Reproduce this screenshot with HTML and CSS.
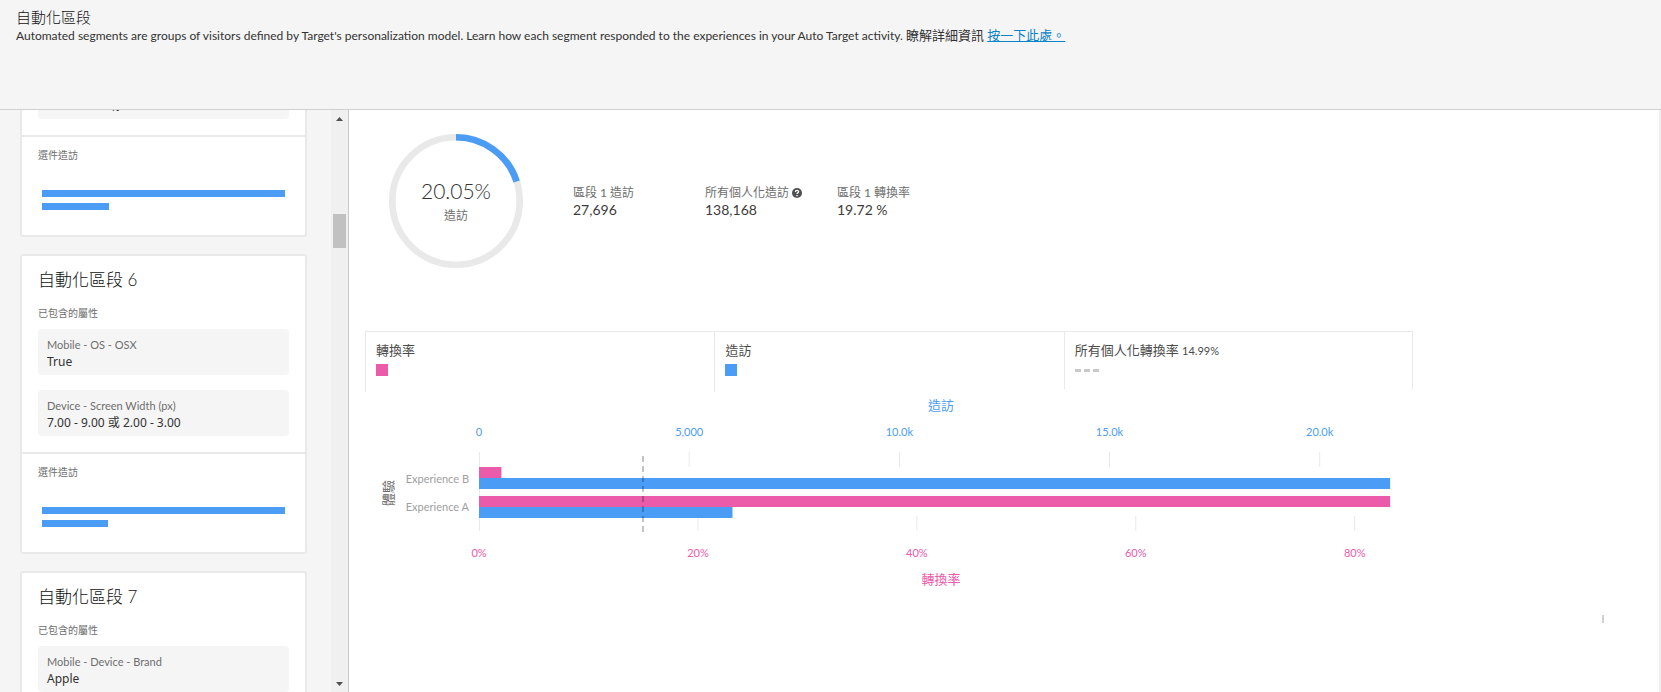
FILE: index.html
```html
<!DOCTYPE html>
<html lang="zh-Hant">
<head>
<meta charset="utf-8">
<title>自動化區段</title>
<link rel="stylesheet" href="styles.css">
</head>
<body>
<header class="page-header">
  <h1 class="page-title">自動化區段</h1>
  <p class="page-intro">Automated segments are groups of visitors defined by Target's personalization model. Learn how each segment responded to the experiences in your Auto Target activity. <span class="more">瞭解詳細資訊 <a class="link" href="#">按一下此處。</a></span></p>
</header>
<div class="body">
  <aside class="sidebar">
    <div class="segments">
      <article class="card card-clipped">
        <div class="card-attributes">
          <div class="attribute"><span class="attribute-value">7.00 - 9.00 或</span></div>
        </div>
        <div class="card-visits">
          <h3 class="card-label">選件造訪</h3>
          <div class="mini-chart"><i class="mini-bar" style="width:100%"></i><i class="mini-bar" style="width:27.7%"></i></div>
        </div>
      </article>
      <article class="card">
        <div class="card-attributes">
          <h2 class="card-title">自動化區段 6</h2>
          <h3 class="card-label">已包含的屬性</h3>
          <div class="attribute"><span class="attribute-name">Mobile - OS - OSX</span><span class="attribute-value">True</span></div>
          <div class="attribute"><span class="attribute-name">Device - Screen Width (px)</span><span class="attribute-value">7.00 - 9.00 或 2.00 - 3.00</span></div>
        </div>
        <div class="card-visits">
          <h3 class="card-label">選件造訪</h3>
          <div class="mini-chart"><i class="mini-bar" style="width:100%"></i><i class="mini-bar" style="width:27.3%"></i></div>
        </div>
      </article>
      <article class="card">
        <div class="card-attributes">
          <h2 class="card-title">自動化區段 7</h2>
          <h3 class="card-label">已包含的屬性</h3>
          <div class="attribute"><span class="attribute-name">Mobile - Device - Brand</span><span class="attribute-value">Apple</span></div>
        </div>
      </article>
    </div>
    <div class="scrollbar">
      <button class="scroll-button" type="button" aria-label="Up"><svg width="7" height="4" viewBox="0 0 7 4"><path d="M0 4L3.500 0L7 4z" fill="#505050"/></svg></button>
      <div class="scroll-track"><div class="scroll-thumb"></div></div>
      <button class="scroll-button" type="button" aria-label="Down"><svg width="7" height="4" viewBox="0 0 7 4"><path d="M0 0L3.500 4L7 0z" fill="#505050"/></svg></button>
    </div>
  </aside>
  <main class="detail">
    <section class="summary">
      <div class="donut">
        <svg class="donut-ring" viewBox="0 0 134 134">
          <circle cx="67" cy="67" r="63.700" fill="none" stroke="#e9e9e9" stroke-width="6.600"/>
          <circle cx="67" cy="67" r="63.700" fill="none" stroke="#4b9cf5" stroke-width="6.600" pathLength="100" stroke-dasharray="20.05 79.95" transform="rotate(-90 67 67)"/>
        </svg>
        <div class="donut-text"><span class="donut-value">20.05%</span><span class="donut-label">造訪</span></div>
      </div>
      <dl class="stats">
        <div class="stat"><dt>區段 1 造訪</dt><dd>27,696</dd></div>
        <div class="stat"><dt>所有個人化造訪 <svg class="help" viewBox="0 0 10 10"><circle cx="5" cy="5" r="5" fill="#505050"/><path d="M3.400 3.900C3.400 1.700 6.700 1.800 6.600 3.800C6.500 4.800 5 4.900 5 6.100" fill="none" stroke="#fff" stroke-width="1.300"/><rect x="4.300" y="7" width="1.400" height="1.300" fill="#fff"/></svg></dt><dd>138,168</dd></div>
        <div class="stat"><dt>區段 1 轉換率</dt><dd>19.72 %</dd></div>
      </dl>
    </section>
    <section class="report">
      <div class="legend">
        <div class="legend-item"><span>轉換率</span><i class="swatch swatch-rate"></i></div>
        <div class="legend-item"><span>造訪</span><i class="swatch swatch-visits"></i></div>
        <div class="legend-item legend-last"><span>所有個人化轉換率 <span class="legend-rate">14.99%</span></span><i class="dashes"><b></b><b></b><b></b></i></div>
      </div>
      <div class="chart">
        <div class="axis-title">體驗</div>
        <div class="categories"><span>Experience B</span><span>Experience A</span></div>
        <svg class="plot" height="200">
          <g class="axis-visits" text-anchor="middle">
            <text class="title" x="50.700%" y="18">造訪</text>
            <text x="0%" y="44">0</text><text x="23.070%" y="44">5,000</text><text x="46.140%" y="44">10.0k</text><text x="69.200%" y="44">15.0k</text><text x="92.270%" y="44">20.0k</text>
          </g>
          <g stroke="#e9e9e9">
            <path d="M.5 60v79"/>
            <line x1="23.070%" x2="23.070%" y1="60" y2="75"/><line x1="46.140%" x2="46.140%" y1="60" y2="75"/><line x1="69.200%" x2="69.200%" y1="60" y2="75"/><line x1="92.270%" x2="92.270%" y1="60" y2="75"/>
            <line x1="24.030%" x2="24.030%" y1="124" y2="139"/><line x1="48.060%" x2="48.060%" y1="124" y2="139"/><line x1="72.080%" x2="72.080%" y1="124" y2="139"/><line x1="96.110%" x2="96.110%" y1="124" y2="139"/>
          </g>
          <g fill="#ec5aaa"><rect x="0" y="75" width="2.460%" height="11"/><rect x="0" y="104" width="100%" height="11"/></g>
          <g fill="#4b9cf5"><rect x="0" y="86" width="100%" height="11"/><rect x="0" y="115" width="27.820%" height="11"/></g>
          <line x1="18%" x2="18%" y1="64" y2="140" stroke="#000" stroke-opacity=".23" stroke-width="2" stroke-dasharray="6 4"/>
          <g class="axis-rate" text-anchor="middle">
            <text x="0%" y="165">0%</text><text x="24.030%" y="165">20%</text><text x="48.060%" y="165">40%</text><text x="72.080%" y="165">60%</text><text x="96.110%" y="165">80%</text>
            <text class="title" x="50.700%" y="192">轉換率</text>
          </g>
        </svg>
      </div>
    </section>
    <i class="marker"></i>
  </main>
</div>
</body>
</html>
```
FILE: styles.css
```css
* { box-sizing: border-box; }
body {
  margin: 0;
  height: 100vh;
  display: flex;
  flex-direction: column;
  overflow: hidden;
  background: #f5f5f5;
  color: #323232;
  font: 13px/18px Lato, "Noto Sans CJK TC", sans-serif;
}
h1, h2, h3, p, dl, dd { margin: 0; font-weight: 400; }
.page-header {
  flex: none;
  height: 110px;
  padding: 8px 16px;
  border-bottom: 1px solid #d0d0d0;
}
.page-title { font-size: 15px; line-height: 18px; font-weight: 300; color: #111; }
.page-intro { font-size: 12px; line-height: 19px; }
.more { font-size: 13px; }
.link { color: #0a84c6; text-decoration: underline; }
.body { flex: 1; min-height: 0; display: flex; }
.sidebar {
  flex: none;
  width: 349px;
  display: flex;
  border-right: 1px solid #cacaca;
}
.segments {
  flex: 1;
  min-width: 0;
  overflow: hidden;
  display: flex;
  flex-direction: column;
  gap: 17px;
  padding: 0 24px 0 20px;
}
.card {
  flex: none;
  background: #fff;
  border: 2px solid #e9e9e9;
  border-radius: 3px;
}
.card-attributes { padding: 13px 16px 16px; }
.card-clipped { margin-top: -52px; }
.card-title { font-size: 17px; line-height: 22px; font-weight: 300; color: #111; }
.card-label { font-size: 10px; line-height: 12px; color: #6e6e6e; }
.card-title + .card-label { margin: 16px 0 10px; }
.attribute {
  height: 46px;
  display: flex;
  flex-direction: column;
  justify-content: flex-end;
  padding: 5px 9px;
  background: #f5f5f5;
  border-radius: 4px;
}
.attribute + .attribute { margin-top: 15px; }
.attribute-name { font-size: 11px; line-height: 17px; color: #6e6e6e; }
.attribute-value { font-family: "Noto Sans", "Noto Sans CJK TC", sans-serif; font-size: 12px; line-height: 17px; }
.card-visits { height: 100px; padding: 12px 20px 0; border-top: 2px solid #e9e9e9; }
.card-visits .card-label { margin-left: -4px; }
.mini-chart { display: flex; flex-direction: column; gap: 6px; margin-top: 29px; }
.mini-bar { display: block; height: 7px; background: #4b9cf5; }
.scrollbar { flex: none; width: 17px; display: flex; flex-direction: column; background: #f0f0f0; }
.scroll-button {
  height: 17px;
  padding: 0;
  border: 0;
  background: none;
  display: flex;
  align-items: center;
  justify-content: center;
}
.scroll-track { flex: 1; display: flex; flex-direction: column; padding: 87px 2px 0; }
.scroll-thumb { height: 34px; background: #c1c1c1; }
.detail {
  flex: 1;
  min-width: 0;
  background: #fff;
  border-right: 2px solid #f0f0f0;
  padding: 24px 0 0 16px;
}
.summary { display: flex; align-items: center; padding-left: 24px; }
.donut { width: 134px; height: 134px; display: grid; }
.donut-ring, .donut-text { grid-area: 1 / 1; }
.donut-text { display: flex; flex-direction: column; align-items: center; padding-top: 44px; }
.donut-value { font-size: 21px; line-height: 26px; font-weight: 300; color: #323232; }
.donut-label { font-size: 12px; line-height: 24px; color: #6e6e6e; }
.stats { display: flex; padding-left: 50px; }
.stat { width: 132px; white-space: nowrap; }
.stat dt { font-size: 12px; line-height: 17px; color: #6e6e6e; }
.stat dd { font-size: 14px; line-height: 17px; color: #3c3c3c; }
.help { width: 10px; height: 10px; vertical-align: -1px; }
.report { width: 81%; margin-top: 63px; }
.legend { display: grid; grid-template-columns: repeat(3, 1fr); border-top: 1px solid #e9e9e9; color: #4b4b4b; }
.legend-item {
  height: 60px;
  display: flex;
  flex-direction: column;
  gap: 5px;
  padding: 9px 10px;
  border-left: 1px solid #e9e9e9;
}
.legend-last { height: 57px; border-right: 1px solid #e9e9e9; }
.legend-rate { font-size: 11px; }
.swatch { width: 12px; height: 12px; }
.swatch-rate { background: #ec5aaa; }
.swatch-visits { background: #4b9cf5; }
.dashes { display: flex; gap: 3px; padding-top: 4px; }
.dashes b { width: 6px; height: 3px; background: #cacaca; }
.chart { display: flex; padding: 0 23px 0 14px; }
.axis-title {
  width: 18px;
  height: 114px;
  writing-mode: vertical-rl;
  text-orientation: sideways;
  transform: rotate(180deg);
  color: #6e6e6e;
}
.categories {
  width: 82px;
  display: flex;
  flex-direction: column;
  gap: 10px;
  padding: 78px 10px 0 0;
  text-align: right;
  font-size: 11px;
  color: #a0a0a0;
  white-space: nowrap;
}
.plot { flex: 1; min-width: 0; overflow: visible; display: block; font-size: 11px; }
.plot .title { font-size: 13px; }
.axis-visits { fill: #4b9cf5; }
.axis-rate { fill: #ec5aaa; }
.marker { display: block; width: 2px; height: 8px; margin: 23px 55px 0 auto; background: #d0d0d0; }
```
